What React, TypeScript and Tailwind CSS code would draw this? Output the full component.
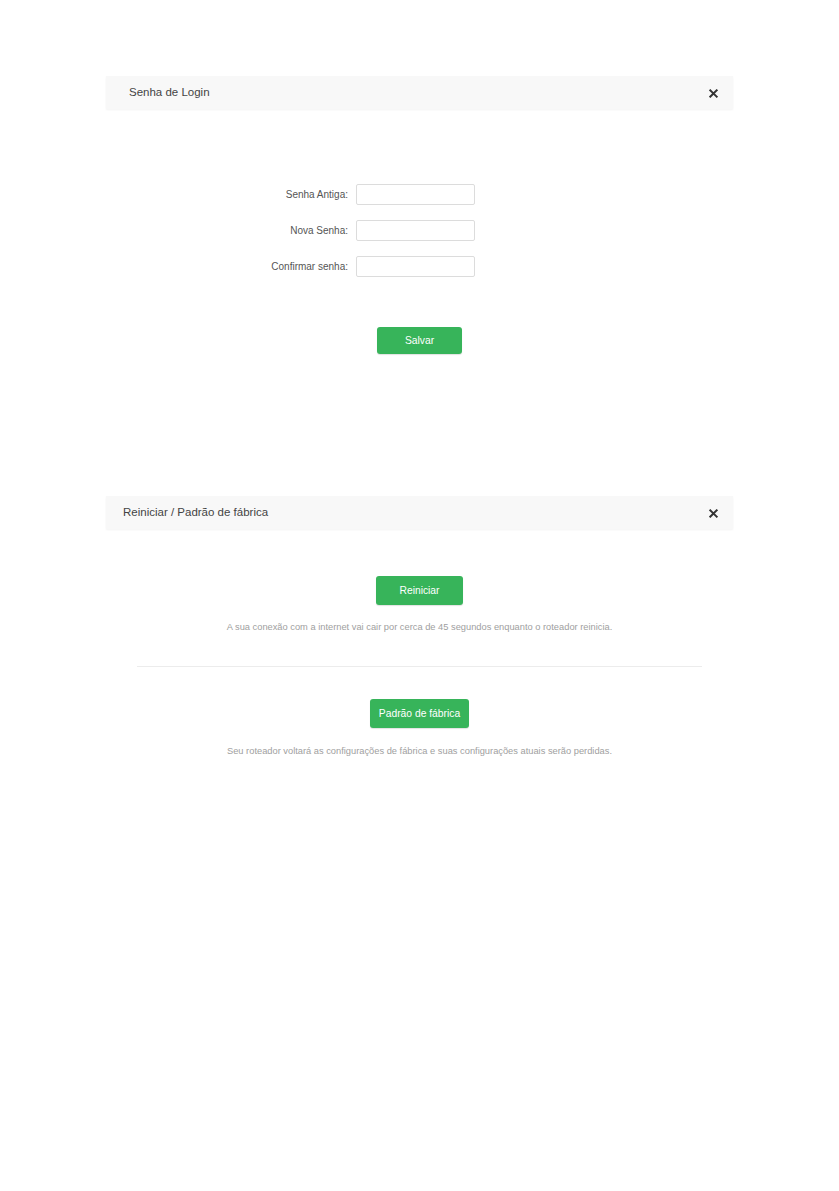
const font = "font-['Liberation_Sans',Arial,sans-serif]";

function CloseIcon() {
  return (
    <svg width="9" height="9" viewBox="0 0 10 10" className="text-[#333]">
      <path d="M1.5 1.5 L8.5 8.5 M8.5 1.5 L1.5 8.5" stroke="currentColor" strokeWidth="2.2" strokeLinecap="square" />
    </svg>
  );
}

function PanelHeader({ title, padLeft }: { title: string; padLeft: string }) {
  return (
    <div
      className={`flex h-[33px] items-center justify-between bg-[#f8f8f8] pr-[12px] shadow-[0_1px_2px_rgba(0,0,0,0.05)] ${padLeft}`}
    >
      <h3 className="text-[11.5px] text-[#444]">{title}</h3>
      <button type="button" className="flex h-[16px] w-[16px] items-center justify-center pt-[1px]">
        <CloseIcon />
      </button>
    </div>
  );
}

function GreenButton({ label, width }: { label: string; width: string }) {
  return (
    <button
      type="button"
      className={`mx-auto flex items-center justify-center rounded-[3px] bg-[#37b45a] text-[10.3px] text-white shadow-[0_1px_1px_rgba(0,0,0,0.12)] ${width}`}
    >
      {label}
    </button>
  );
}

const fields = ["Senha Antiga:", "Nova Senha:", "Confirmar senha:"];

export default function App() {
  return (
    <div className={`min-h-[1191px] bg-white pt-[76px] ${font}`}>
      <section className="mx-auto w-[627px]">
        <PanelHeader title="Senha de Login" padLeft="pl-[23px]" />

        <form className="flex flex-col gap-[15px] pt-[75px]">
          {fields.map((f) => (
            <div key={f} className="flex items-center">
              <label className="w-[242px] text-right text-[10px] text-[#555]">{f}</label>
              <input
                type="password"
                className="ml-[8px] h-[21px] w-[119px] rounded-[2px] border border-[#dcdcdc] bg-white outline-none"
              />
            </div>
          ))}
        </form>

        <div className="mt-[50px]">
          <GreenButton label="Salvar" width="h-[27px] w-[85px]" />
        </div>
      </section>

      <section className="mx-auto mt-[142px] w-[627px]">
        <PanelHeader title="Reiniciar / Padrão de fábrica" padLeft="pl-[17px]" />

        <div className="mt-[47px]">
          <GreenButton label="Reiniciar" width="h-[29px] w-[87px]" />
        </div>
        <p className="mt-[16px] text-center text-[9.3px] leading-[12px] text-[#a0a0a0]">
          A sua conexão com a internet vai cair por cerca de 45 segundos enquanto o roteador reinicia.
        </p>

        <div className="mx-[31px] mt-[33px] border-t border-[#ececec]" />

        <div className="mt-[32px]">
          <GreenButton label="Padrão de fábrica" width="h-[29px] w-[99px]" />
        </div>
        <p className="mt-[17px] text-center text-[9.3px] leading-[12px] text-[#a0a0a0]">
          Seu roteador voltará as configurações de fábrica e suas configurações atuais serão perdidas.
        </p>
      </section>
    </div>
  );
}
